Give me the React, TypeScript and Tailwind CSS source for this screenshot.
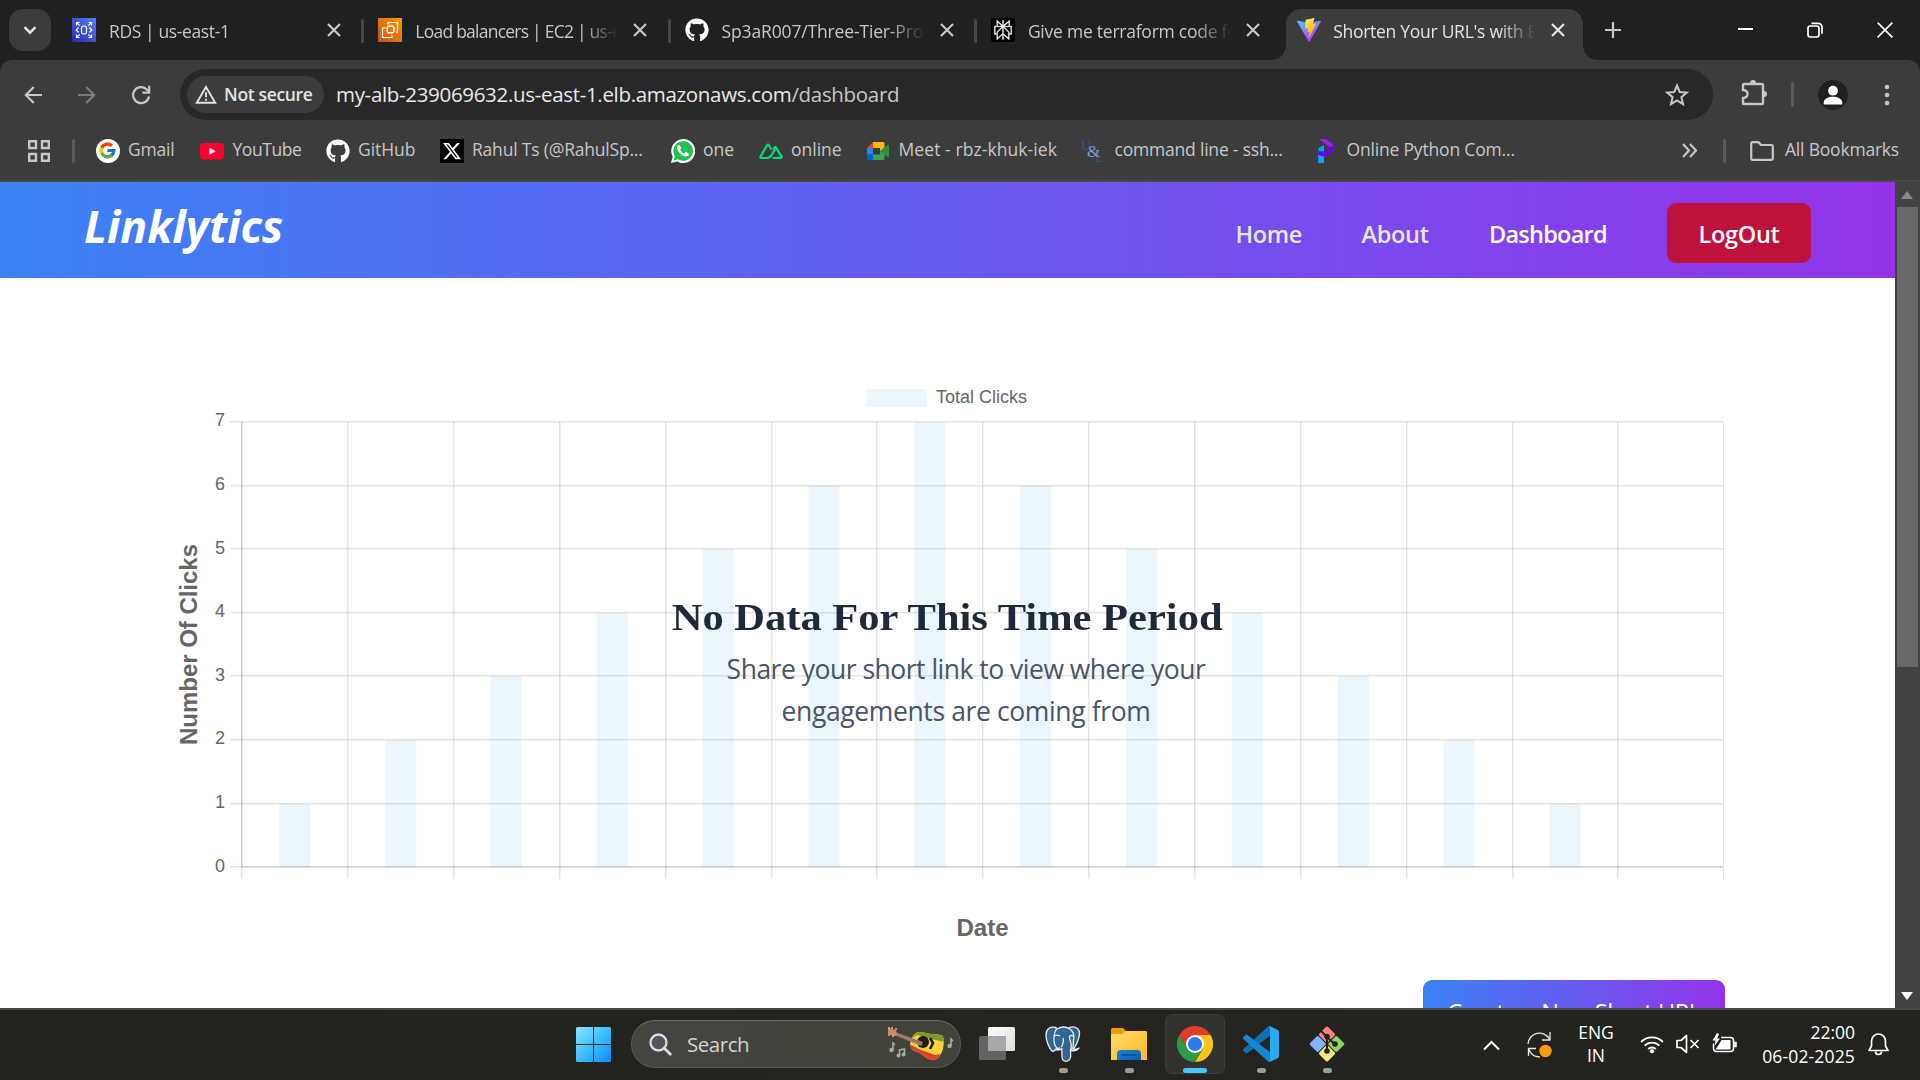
import type { ReactNode } from "react";
import { FaGithub, FaXTwitter } from "react-icons/fa6";
import { FcGoogle } from "react-icons/fc";
import { SiPerplexity } from "react-icons/si";

/* ---------- favicons ---------- */

function RdsIcon() {
  return (
    <svg width="24" height="24" viewBox="0 0 24 24" className="shrink-0" fill="none" stroke="#fff" strokeWidth="1.2">
      <defs>
        <linearGradient id="rds" x1="0" y1="1" x2="1" y2="0">
          <stop offset="0" stopColor="#2e27ad" />
          <stop offset="1" stopColor="#527fff" />
        </linearGradient>
      </defs>
      <rect width="24" height="24" fill="url(#rds)" stroke="none" />
      <path d="M4.500 7.500v-3h3M4.500 4.500l3.200 3.200M19.500 7.500v-3h-3M19.500 4.500l-3.200 3.200M4.500 16.500v3h3M4.500 19.500l3.200-3.200M19.500 16.500v3h-3M19.500 19.500l-3.200-3.200" />
      <path d="M6.500 9.500L4.200 12l2.300 2.500M17.500 9.500l2.300 2.500-2.300 2.500" />
      <rect x="9.500" y="8.200" width="5" height="7.600" rx="1.800" />
    </svg>
  );
}

function Ec2Icon() {
  return (
    <svg width="24" height="24" viewBox="0 0 24 24" className="shrink-0" fill="none" stroke="#fff" strokeWidth="1.2">
      <defs>
        <linearGradient id="ec2" x1="0" y1="1" x2="1" y2="0">
          <stop offset="0" stopColor="#c8511b" />
          <stop offset="1" stopColor="#f90" />
        </linearGradient>
      </defs>
      <rect width="24" height="24" fill="url(#ec2)" stroke="none" />
      <path d="M10 6.500V4.500h9.500V14H17.800M7.800 10H4.500v9.500H14V17.500" />
      <rect x="9.300" y="8.300" width="6.400" height="6.400" rx="1.200" />
      <path d="M11.200 6.800v1.500M13.800 6.800v1.500M11.200 14.700v1.500M13.800 14.700v1.500M7.800 10.200h1.500M7.800 12.800h1.500M15.700 10.200h1.500M15.700 12.800h1.500" strokeWidth="1" />
    </svg>
  );
}

function GithubIcon() {
  return <FaGithub size={24} color="#fff" className="shrink-0" />;
}

function PerplexityIcon() {
  return (
    <span className="flex size-6 shrink-0 items-center justify-center rounded-[2px] bg-black">
      <SiPerplexity size={20} color="#fff" stroke="#fff" strokeWidth={0.4} />
    </span>
  );
}

function ViteIcon() {
  return (
    <svg width="24" height="24" viewBox="0 0 24 24" className="shrink-0">
      <defs>
        <linearGradient id="viteA" x1="0" y1="0" x2="0.6" y2="1">
          <stop offset="0" stopColor="#41d1ff" />
          <stop offset="1" stopColor="#bd34fe" />
        </linearGradient>
        <linearGradient id="viteB" x1="0.4" y1="0" x2="0.6" y2="1">
          <stop offset="0" stopColor="#ffea83" />
          <stop offset="0.2" stopColor="#ffdd35" />
          <stop offset="1" stopColor="#ffa800" />
        </linearGradient>
      </defs>
      <path d="M23.800 3.700L12.700 23.500a.6.6 0 0 1-1.060 0L.2 3.700a.6.6 0 0 1 .64-.9l11.200 2 11.120-2a.6.6 0 0 1 .64.9z" fill="url(#viteA)" />
      <path d="M17 .1L8.800 1.700a.3.3 0 0 0-.24.28l-.5 8.500c0 .2.18.35.37.3l2.300-.53c.2-.05.4.14.35.35l-.68 3.340c-.05.22.16.42.38.35l1.400-.43c.23-.07.43.13.38.35l-1.080 5.250c-.07.33.37.5.55.23l.12-.18 6.730-13.430c.11-.23-.08-.48-.33-.43l-2.370.45c-.22.05-.41-.16-.35-.38L17.400.45A.3.3 0 0 0 17 .1z" fill="url(#viteB)" />
    </svg>
  );
}

function CloseGlyph({ className }: { className: string }) {
  return (
    <svg width="14" height="14" viewBox="0 0 14 14" className={className} fill="none" stroke="currentColor" strokeWidth="2.2">
      <path d="M1 1l12 12M13 1L1 13" />
    </svg>
  );
}

/* ---------- tab strip ---------- */

const tabs: { icon: ReactNode; title: string; track: string }[] = [
  { icon: <RdsIcon />, title: "RDS | us-east-1", track: "tracking-[-0.38px]" },
  { icon: <Ec2Icon />, title: "Load balancers | EC2 | us-east-1", track: "tracking-[-0.76px]" },
  { icon: <GithubIcon />, title: "Sp3aR007/Three-Tier-Project", track: "tracking-[-0.15px]" },
  { icon: <PerplexityIcon />, title: "Give me terraform code for", track: "tracking-[-0.24px]" },
];

const fade = "[mask-image:linear-gradient(to_right,#000_166px,transparent_203px)]";

function TabStrip() {
  return (
    <div className="flex h-[60px] shrink-0 bg-[#1f2120]">
      <button className="mt-[9px] ml-[9px] flex h-[42px] w-[42px] items-center justify-center rounded-[14px] bg-[#3c3c3c]">
        <svg width="14" height="9" viewBox="0 0 14 9" fill="none" stroke="#e3e3e3" strokeWidth="2.6">
          <path d="M1.500 1.200L7 6.700l5.500-5.500" />
        </svg>
      </button>
      <div className="ml-[6px] flex">
        {tabs.map((t, i) => (
          <div key={t.title} className="relative flex h-[60px] w-[306.3px] items-center pl-[15px]">
            {i > 0 && <span className="absolute top-[19px] left-[-2px] h-6 w-[3px] rounded-full bg-[#454545]" />}
            {t.icon}
            <span className={`ml-[13px] w-[205px] overflow-hidden pt-0.5 text-[17.5px] whitespace-nowrap text-[#c7c7c7] ${t.track} ${fade}`}>{t.title}</span>
            <CloseGlyph className="ml-[13px] text-[#c7c7c7]" />
          </div>
        ))}
      </div>
      <div className="relative ml-[4px] flex h-[60px] w-[297px] pt-[9px]">
        <span className="absolute bottom-0 left-[-14px] size-[14px] bg-[radial-gradient(circle_at_0_0,transparent_13.5px,#3c3c3c_14px)]" />
        <span className="absolute right-[-14px] bottom-0 size-[14px] bg-[radial-gradient(circle_at_100%_0,transparent_13.5px,#3c3c3c_14px)]" />
        <div className="flex h-full w-full items-center rounded-t-[15px] bg-[#3c3c3c] pb-[9px] pl-[11px]">
          <ViteIcon />
          <span className={`ml-[12px] w-[205px] overflow-hidden pt-0.5 text-[17.5px] tracking-[-0.28px] whitespace-nowrap text-[#e3e3e3] ${fade}`}>Shorten Your URL's with Ease</span>
          <CloseGlyph className="ml-[13px] text-[#e3e3e3]" />
        </div>
      </div>
      <svg width="16" height="16" viewBox="0 0 16 16" className="mt-[22px] ml-[22px]" stroke="#c7c7c7" strokeWidth="2.2">
        <path d="M8 0v16M0 8h16" />
      </svg>
      <div className="mr-[27px] ml-auto flex items-center gap-[54px] text-white">
        <span className="mt-[-2px] h-0.5 w-[15px] bg-white" />
        <svg width="16" height="16" viewBox="0 0 16 16" fill="none" stroke="currentColor" strokeWidth="1.7" className="mt-[-1px]">
          <rect x="1" y="4" width="11" height="11" rx="2.2" />
          <path d="M4.500 1.300h6.500a4 4 0 0 1 4 4v6.500" />
        </svg>
        <svg width="16" height="16" viewBox="0 0 16 16" stroke="currentColor" strokeWidth="1.7" className="mt-[-1px]">
          <path d="M.6.6l14.800 14.800M15.400.6L.6 15.400" />
        </svg>
      </div>
    </div>
  );
}

/* ---------- toolbar ---------- */

function Toolbar() {
  return (
    <div className="flex h-[69px] shrink-0 items-center text-[#c7c7c7]">
      <svg width="18" height="18" viewBox="0 0 18 18" className="ml-6 shrink-0" fill="none" stroke="currentColor" strokeWidth="2.2">
        <path d="M18 9H2M9.800 1L1.800 9l8 8" />
      </svg>
      <svg width="18" height="18" viewBox="0 0 18 18" className="ml-9 shrink-0 text-[#7d7d7d]" fill="none" stroke="currentColor" strokeWidth="2.2">
        <path d="M0 9h16M8.200 1l8 8-8 8" />
      </svg>
      <svg width="20" height="20" viewBox="0 0 20 20" className="ml-[35px] shrink-0" fill="none" stroke="currentColor" strokeWidth="2.2">
        <path d="M18 11.500A8 8 0 1 1 15.500 4.200L18 6.700" />
        <path d="M18.200.8v6.900h-6.900" />
      </svg>
      <div className="ml-[29px] flex h-[51px] w-[1533px] items-center rounded-full bg-[#282828] pl-[7px]">
        <div className="flex h-[37px] w-[137px] items-center rounded-full bg-[#3c3c3c] pl-2 text-[#e3e3e3]">
          <svg width="22" height="19" viewBox="0 0 22 19" className="shrink-0" fill="none" stroke="currentColor" strokeWidth="1.9">
            <path d="M11 2L20.200 17.800H1.800z" />
            <path d="M11 7.300v5M11 13.700v2" />
          </svg>
          <span className="ml-[7px] text-[17.5px] font-semibold tracking-[-0.33px] whitespace-nowrap">Not secure</span>
        </div>
        <span className="ml-[12px] text-[20.5px] tracking-[-0.32px] whitespace-nowrap text-[#e8e8e8]">
          my-alb-239069632.us-east-1.elb.amazonaws.com<span className="text-[#c7c7c7]">/dashboard</span>
        </span>
        <svg width="24" height="24" viewBox="0 0 24 24" className="mr-[24px] ml-auto" fill="none" stroke="currentColor" strokeWidth="2">
          <path d="M12 2.500l2.700 6.500 7 .6-5.300 4.600 1.600 6.900-6-3.700-6 3.700 1.600-6.900L2.300 9.600l7-.6z" />
        </svg>
      </div>
      <svg width="26" height="28" viewBox="0 0 26 28" className="mb-[3px] ml-[28px] shrink-0" fill="none" stroke="currentColor" strokeWidth="2.4">
        <path d="M3 5h18a1 1 0 0 1 1 1v18a1 1 0 0 1-1 1H3a1 1 0 0 1-1-1v-5c3.500 0 4.500-2 4.500-4s-1-4-4.500-4V6a1 1 0 0 1 1-1z" />
        <path d="M9 4a3 3 0 0 1 6 0zM23 12a3 3 0 0 1 0 6z" fill="currentColor" stroke="none" />
      </svg>
      <span className="ml-[24px] h-[25px] w-[3px] rounded-full bg-[#5a5a5a]" />
      <svg width="30" height="30" viewBox="0 0 30 30" className="ml-[24px] shrink-0">
        <circle cx="15" cy="15" r="15" fill="#1f2120" />
        <circle cx="15" cy="10.7" r="4.9" fill="#fff" />
        <path d="M5.700 24.500v-2c0-4 5-5.800 9.300-5.800s9.300 1.800 9.300 5.800v2z" fill="#fff" />
      </svg>
      <svg width="6" height="24" viewBox="0 0 6 24" className="ml-[36px] shrink-0" fill="currentColor">
        <circle cx="3" cy="4" r="2.3" />
        <circle cx="3" cy="12" r="2.3" />
        <circle cx="3" cy="20" r="2.3" />
      </svg>
    </div>
  );
}

/* ---------- bookmarks bar ---------- */

function WhatsappIcon() {
  return (
    <svg width="24" height="24" viewBox="0 0 24 24">
      <path d="M0 24l1.700-6.200A12 12 0 1 1 6.200 22.400z" fill="#fff" />
      <path d="M2.600 21.400l1.200-4.300A9.800 9.800 0 1 1 7 20.300z" fill="#1fc253" />
      <path d="M8.400 6.300c-.5-.5-1-.4-1.500.1-1.700 1.800-1 4.300 1.300 7 2.700 3.100 6 5 8.400 3.600 1-.6 1.500-1.700 1.200-2.300-.2-.4-2.300-1.500-2.800-1.600-.6 0-1.100 1.400-1.600 1.400-1 0-4.100-2.700-4.200-3.700 0-.5 1-1 1-1.600 0-.5-1.200-2.400-1.800-2.900z" fill="#fff" />
    </svg>
  );
}

function MeetIcon() {
  return (
    <svg width="24" height="24" viewBox="0 0 24 24">
      <path d="M1 9l6-6v6z" fill="#ea4335" />
      <path d="M1 9h6v6.500H1z" fill="#2684fc" />
      <path d="M1 15.500h6V21H2.500A1.500 1.500 0 0 1 1 19.500z" fill="#0066da" />
      <path d="M7 3h10a1.500 1.500 0 0 1 1.500 1.500v5L14 12V9H7z" fill="#ffba00" />
      <path d="M7 21v-5.500h7V12l4.500 2v5.500A1.500 1.500 0 0 1 17 21z" fill="#35a853" />
      <path d="M14 12l7.500-6c.6-.5 1.500 0 1.500.7v10.600c0 .7-.9 1.200-1.500.7z" fill="#2a8f47" />
    </svg>
  );
}

const bookmarks: { icon: ReactNode; label: string; cls: string; track: string }[] = [
  {
    icon: (
      <span className="flex size-6 items-center justify-center rounded-full bg-white">
        <FcGoogle size={19} />
      </span>
    ),
    label: "Gmail",
    cls: "w-[104.5px]",
    track: "tracking-[-0.2px]",
  },
  {
    icon: (
      <svg width="24" height="24" viewBox="0 0 24 24">
        <rect y="4" width="24" height="16.5" rx="4" fill="#ff0033" />
        <path d="M9.500 8.700v7l6-3.500z" fill="#fff" />
      </svg>
    ),
    label: "YouTube",
    cls: "w-[125.5px]",
    track: "tracking-[-0.45px]",
  },
  { icon: <GithubIcon />, label: "GitHub", cls: "w-[114px]", track: "tracking-[-0.05px]" },
  {
    icon: (
      <span className="flex size-6 items-center justify-center bg-black">
        <FaXTwitter size={20} color="#fff" />
      </span>
    ),
    label: "Rahul Ts (@RahulSp...",
    cls: "w-[231px]",
    track: "tracking-[-0.2px]",
  },
  { icon: <WhatsappIcon />, label: "one", cls: "w-[88px]", track: "tracking-[0px]" },
  {
    icon: (
      <svg width="24" height="24" viewBox="0 0 24 24" fill="none" stroke="#00dc82" strokeWidth="2.2" strokeLinejoin="round">
        <path d="M8 19H2.300a.9.9 0 0 1-.8-1.400L8.200 6a.9.9 0 0 1 1.600 0l2.600 4.500" />
        <path d="M8 19c2.500 0 3.500-1 4.500-2.700L16 10.200" />
        <path d="M13.500 19h8.200c.9 0 1.400-.8.900-1.500L17 8.600a.9.9 0 0 0-1.600 0l-1.200 2.200" />
      </svg>
    ),
    label: "online",
    cls: "w-[107.5px]",
    track: "tracking-[0px]",
  },
  { icon: <MeetIcon />, label: "Meet - rbz-khuk-iek", cls: "w-[216px]", track: "tracking-[0.08px]" },
  {
    icon: (
      <svg width="24" height="24" viewBox="0 0 24 24" className="font-['Liberation_Serif']">
        <text x="-1" y="11" fontSize="14" fill="#34508c">U</text>
        <text x="13" y="23" fontSize="14" fill="#34508c">L</text>
        <text x="5" y="18" fontSize="17" fill="#7f9bd8">&amp;</text>
      </svg>
    ),
    label: "command line - ssh...",
    cls: "w-[232px]",
    track: "tracking-[-0.2px]",
  },
  {
    icon: (
      <svg width="24" height="24" viewBox="0 0 24 24">
        <path d="M4.500 0H12l7.500 6v6L13 6z" fill="#9b1fff" />
        <path d="M4.500 9L10 6v18H4.500z" fill="#0a9bff" />
        <path d="M19.500 6v5.500l-9 6.500-6-2v-4l6 .5z" fill="#6a00e8" />
        <path d="M4.500 16l5.500 2v6H4.500z" fill="#0aa5ff" />
      </svg>
    ),
    label: "Online Python Com...",
    cls: "w-[230px]",
    track: "tracking-[-0.18px]",
  },
];

function BookmarksBar() {
  return (
    <div className="flex h-[53px] shrink-0 items-center border-b-2 border-[#474747] pb-3 text-[17.5px] whitespace-nowrap text-[#c7c7c7]">
      <svg width="22" height="22" viewBox="0 0 22 22" className="mt-1 ml-[28px] shrink-0" fill="none" stroke="currentColor" strokeWidth="2.4">
        <path d="M1.200 1.200h6.800v6.800H1.200zM14 1.200h6.800v6.800H14zM1.200 14h6.800v6.800H1.200zM14 14h6.800v6.800H14z" />
      </svg>
      <span className="mt-1 ml-[22px] h-6 w-[3px] shrink-0 rounded-full bg-[#5a5a5a]" />
      <div className="mt-1 ml-[20.5px] flex">
        {bookmarks.map((b) => (
          <div key={b.label} className={`flex shrink-0 items-center ${b.cls}`}>
            <span className="size-6 shrink-0">{b.icon}</span>
            <span className={`ml-[8.5px] pb-0.5 ${b.track}`}>{b.label}</span>
          </div>
        ))}
      </div>
      <svg width="15" height="15" viewBox="0 0 15 15" className="mt-1 mr-[26px] ml-auto shrink-0" fill="none" stroke="currentColor" strokeWidth="2.2">
        <path d="M1 1l6 6.500L1 14M8 1l6 6.500L8 14" />
      </svg>
      <span className="mt-1 h-6 w-[3px] shrink-0 rounded-full bg-[#5a5a5a]" />
      <svg width="24" height="20" viewBox="0 0 24 20" className="mt-1 ml-[24px] shrink-0" fill="none" stroke="currentColor" strokeWidth="2.2">
        <path d="M1.200 17.500V2.500A1.300 1.300 0 0 1 2.500 1.200h6L11 4h10.500A1.300 1.300 0 0 1 22.800 5.300v12.200a1.300 1.300 0 0 1-1.300 1.300h-19a1.300 1.300 0 0 1-1.300-1.300z" />
      </svg>
      <span className="mt-1 mr-[21px] ml-[11px] pb-0.5 tracking-[-0.2px]">All Bookmarks</span>
    </div>
  );
}

/* ---------- page ---------- */

function NavBar() {
  return (
    <header className="flex h-24 shrink-0 items-center bg-linear-to-r/srgb from-[#3b82f6] to-[#9333ea] pr-[84px] pl-[84px] text-[23.5px] font-semibold text-[#e5e7eb]">
      <h1 className="mt-[-7px] font-['Noto_Sans'] text-[44.5px] font-bold text-white italic">Linklytics</h1>
      <nav className="ml-auto flex items-center pt-[9px]">
        <span className="w-[126px] tracking-[-0.4px]">Home</span>
        <span className="w-[127.5px] tracking-[-0.3px]">About</span>
        <span className="w-[178px] tracking-[-0.75px] text-white">Dashboard</span>
      </nav>
      <button className="mt-[5px] flex h-[60px] w-[144px] items-center justify-center rounded-[9px] bg-[#be123c] pt-[4px] tracking-[-0.3px] text-white">LogOut</button>
    </header>
  );
}

const clicks = [1, 2, 3, 4, 5, 6, 7, 6, 5, 4, 3, 2, 1, 0];
const X0 = 241.75;
const STEP_X = 105.86;
const STEP_Y = 63.6;
const BASE = 589;
const TOP = BASE - 7 * STEP_Y;

function ClicksChart() {
  return (
    <svg width="1895" height="730" viewBox="0 0 1895 730" className="block font-['Liberation_Sans']">
      <rect x="867" y="111" width="60" height="18" fill="rgb(235,246,253)" />
      <text x="936" y="125" fontSize="18" fill="#666" textLength="91">Total Clicks</text>
      {clicks.map((v, i) => (
        <g key={i}>
          {i > 0 && <rect x={Math.round(X0 + i * STEP_X - 0.5)} y={TOP} width="1.5" height={BASE - TOP + 12} fill="rgba(0,0,0,0.1)" />}
          {v > 0 && <rect x={X0 + (i + 0.5) * STEP_X - 15.5} y={BASE - v * STEP_Y} width="31" height={v * STEP_Y} fill="rgba(54,162,235,0.1)" />}
        </g>
      ))}
      <rect x="1723" y={TOP} width="1" height={BASE - TOP + 12} fill="rgba(0,0,0,0.1)" />
      {[0, 1, 2, 3, 4, 5, 6, 7].map((n) => (
        <g key={n}>
          <rect x="230" y={Math.round(BASE - n * STEP_Y - 0.75)} width="1493" height="1.5" fill="rgba(0,0,0,0.1)" />
          <text x="225" y={BASE - n * STEP_Y + 4.5} fontSize="18" fill="#666" textAnchor="end">{n}</text>
        </g>
      ))}
      <rect x="241" y={TOP} width="1.5" height={BASE - TOP} fill="rgba(0,0,0,0.2)" />
      <rect x="241" y={BASE} width="1.5" height="12" fill="rgba(0,0,0,0.1)" />
      <rect x="242" y={BASE - 1} width="1481" height="1.5" fill="rgba(0,0,0,0.1)" />
      <text transform="translate(197 366.5) rotate(-90)" fontSize="24" fontWeight="700" fill="#666" textAnchor="middle" textLength="201">Number Of Clicks</text>
      <text x="982.5" y="658" fontSize="24" fontWeight="700" fill="#666" textAnchor="middle">Date</text>
    </svg>
  );
}

function Dashboard() {
  return (
    <main className="relative flex min-h-0 flex-1 flex-col overflow-hidden bg-white">
      <NavBar />
      <div className="relative h-[702px] shrink-0">
        <ClicksChart />
        <div className="absolute inset-x-0 top-[317px] flex flex-col items-center text-center">
          <h2 className="scale-x-[1.119] font-['Liberation_Serif'] text-[38px] leading-[44px] font-bold text-[#1e293b]">No Data For This Time Period</h2>
          <p className="mt-[9px] ml-[37px] text-[26.5px] leading-[42px] text-[#475569]">
            <span className="block tracking-[-0.5px]">Share your short link to view where your</span>
            <span className="block tracking-[-0.38px]">engagements are coming from</span>
          </p>
        </div>
      </div>
      <button className="ml-[1423px] flex h-[66px] w-[302px] shrink-0 justify-center rounded-[9px] bg-linear-to-r/srgb from-[#3b82f6] to-[#9333ea] pt-[14px] text-[23.5px] leading-9 tracking-[-0.4px] whitespace-nowrap text-white">
        Create a New Short URL
      </button>
    </main>
  );
}

function Scrollbar() {
  return (
    <div className="flex w-[25px] shrink-0 flex-col items-center bg-[#424242]">
      <svg width="12" height="9" viewBox="0 0 12 9" className="mt-[9px] mr-px shrink-0">
        <path d="M0 8L6 0l6 8z" fill="#8a8a8a" />
      </svg>
      <div className="mt-[7px] h-[460px] w-[21px] bg-[#686868]" />
      <svg width="12" height="8" viewBox="0 0 12 8" className="mt-auto mr-px mb-[8px] shrink-0">
        <path d="M0 0h12L6 8z" fill="#fff" />
      </svg>
    </div>
  );
}

/* ---------- taskbar ---------- */

function WindowsLogo() {
  return (
    <svg width="35" height="35" viewBox="0 0 35 35" className="shrink-0">
      <defs>
        <linearGradient id="win" x1="0" y1="0" x2="1" y2="1">
          <stop offset="0" stopColor="#8be3ff" />
          <stop offset="0.5" stopColor="#3cc0fb" />
          <stop offset="1" stopColor="#0a8bf5" />
        </linearGradient>
      </defs>
      <path d="M1.500 0H17v17H0V1.500A1.500 1.500 0 0 1 1.500 0zM18 0h15.500A1.500 1.500 0 0 1 35 1.500V17H18zM0 18h17v17H1.500A1.500 1.500 0 0 1 0 33.500zM18 18h17v15.500a1.500 1.500 0 0 1-1.500 1.500H18z" fill="url(#win)" />
    </svg>
  );
}

function Guitar() {
  return (
    <svg width="68" height="40" viewBox="0 -3 68 40" className="ml-auto">
      <defs>
        <clipPath id="body">
          <path d="M28 6.500c4-3 9-1 13 0 5 1 10 0 15 2.500 2 8 0 17-5 22-5 4-10 1-14-2-4-4-10-4-13-8-2-5 0-11 4-14.500z" />
        </clipPath>
      </defs>
      <g clipPath="url(#body)">
        <rect x="20" width="45" height="38" fill="#fbd43c" />
        <path d="M20 0h45v17L40 11l-10-3-8 5z" fill="#7c9a2c" />
        <path d="M20 16l14 7 14 5 14-2v12H20z" fill="#e2402c" />
      </g>
      <circle cx="36" cy="15" r="6" fill="#241c14" />
      <path d="M43 11l3 5-3 6" stroke="#241c14" strokeWidth="2.6" fill="none" />
      <path d="M8 5l28 10-1.500 4L7 8z" fill="#a5776a" />
      <path d="M1 1l8 2 1 5-3 1-6-2z" fill="#d28a5c" />
      <path d="M2 0v2M5 0v2M9 1v2M2 7v2M6 8v2" stroke="#b9bcc2" strokeWidth="1.5" />
      <g fill="none" stroke="#a9aaa6" strokeWidth="1.6">
        <path d="M6 23v-7l2 2M12.500 28v-5l5-1v5M64 19v-7l2 2" />
      </g>
      <g fill="#a9aaa6">
        <circle cx="4.5" cy="23" r="2.2" />
        <circle cx="11.5" cy="28.500" r="2" />
        <circle cx="16.500" cy="27.500" r="2" />
        <circle cx="62.500" cy="19" r="2.2" />
      </g>
    </svg>
  );
}

function TaskView() {
  return (
    <svg width="36" height="36" viewBox="0 0 36 36">
      <defs>
        <linearGradient id="tv" x1="0" y1="0" x2="1" y2="1">
          <stop offset="0" stopColor="#fff" />
          <stop offset="1" stopColor="#dcdcdc" />
        </linearGradient>
      </defs>
      <rect x="9" y="1" width="27" height="24" rx="1.5" fill="url(#tv)" />
      <rect x="0" y="10" width="27" height="24" rx="1.5" fill="#636363" />
      <rect x="9" y="10" width="18" height="15" fill="#a8a8a8" />
    </svg>
  );
}

function Postgres() {
  return (
    <svg width="36" height="36" viewBox="0 0 36 36" fill="#336791" stroke="#e6edf3" strokeWidth="1.3" strokeLinejoin="round">
      <path d="M11 1.500C5 .2 1 3 1 9c0 5 2.500 12 5.500 15.500 1.500 1.500 3 .5 4.500-1.500l2-3z" />
      <path d="M24 1.500c6-1.800 11 1 10.500 6.500-.4 5-3 10.500-5.500 14.500l-3-1z" />
      <path d="M12 3c4-2.500 9-2.500 13 0 3 2.500 4.500 7 3.500 11-.5 3 .2 5-.7 8-.3 1-1.300 1.500-2.300 1.300l.2 7c-.2 3-2 4.700-4.700 5-2.200 0-3.700-1.300-4-4l-.3-9c-1 .8-3 .9-4.200 0-2-1.300-3.500-5-3.500-9C9 9 9 5 12 3z" />
      <path d="M26 22c2 1.500 5.500 1.400 8 0-1 2-4.500 3.300-8 2.500zM16.700 22.300c-1 1.700-4 2.300-6 1.200 1.200-.6 2.500-.2 4-2" />
      <path d="M15 10c-2.500-1.200-5-1-6 1M18 12c1 3 .5 5-1.500 9M24.500 10c2-.8 3.500-.6 4.300.5M24.500 10c-.6 4 3 7 1.500 12" fill="none" />
    </svg>
  );
}

function Explorer() {
  return (
    <svg width="36" height="36" viewBox="0 0 36 36">
      <defs>
        <linearGradient id="fold" x1="0" y1="0" x2="1" y2="1">
          <stop offset="0" stopColor="#ffdc6b" />
          <stop offset="1" stopColor="#fdb924" />
        </linearGradient>
        <linearGradient id="tray" x1="0" y1="0" x2="1" y2="1">
          <stop offset="0" stopColor="#1687dc" />
          <stop offset="1" stopColor="#0a5cae" />
        </linearGradient>
      </defs>
      <path d="M0 3.500A1.500 1.500 0 0 1 1.500 2H12l3.500 3.500V12H0z" fill="#e3a008" />
      <path d="M0 8h11l4-3h19.500A1.500 1.500 0 0 1 36 6.500V34H0z" fill="url(#fold)" />
      <path d="M6 34v-6.500A3.500 3.500 0 0 1 9.500 24h17a3.500 3.500 0 0 1 3.500 3.500V34z" fill="url(#tray)" />
      <path d="M11 29h14" stroke="#0a4a8c" strokeWidth="1.5" strokeLinecap="round" />
    </svg>
  );
}

function Chrome() {
  return (
    <svg width="36" height="36" viewBox="0 0 36 36">
      <path d="M33.600 9A18 18 0 0 1 18 36l7.800-13.500L18 9z" fill="#fcc31e" />
      <path d="M18 36A18 18 0 0 1 2.400 9l7.800 13.500h15.600z" fill="#2e9a47" />
      <path d="M2.400 9A18 18 0 0 1 33.600 9H18l-7.800 13.500z" fill="#e33b2e" />
      <circle cx="18" cy="18" r="9" fill="#fff" />
      <circle cx="18" cy="18" r="7.1" fill="#2f7bed" />
    </svg>
  );
}

function VsCode() {
  return (
    <svg width="36" height="36" viewBox="0 0 24 24">
      <path d="M18 .1v6.450L3 18a1 1 0 0 1-1.350-.06L.33 16.740a1 1 0 0 1 0-1.480L16.500.5A1.500 1.500 0 0 1 18 .1z" fill="#0f6fb8" />
      <path d="M18 23.900v-6.450L3 6a1 1 0 0 0-1.350.06L.33 7.260a1 1 0 0 0 0 1.480L16.500 23.500a1.500 1.500 0 0 0 1.500.4z" fill="#1488d4" />
      <path d="M23.150 2.590L18.200.21A1.500 1.500 0 0 0 17.300.1L18 1v22l-.7.9c.3.07.6.03.9-.1l4.950-2.380A1.500 1.500 0 0 0 24 20.060V3.940a1.500 1.500 0 0 0-.85-1.350z" fill="#2aa9f3" />
    </svg>
  );
}

function GitBash() {
  return (
    <svg width="36" height="36" viewBox="0 0 36 36">
      <g transform="rotate(45 18 18)">
        <rect x="5.3" y="5.3" width="12.2" height="12.2" rx="1.5" fill="#ff8080" />
        <rect x="18.5" y="5.3" width="12.2" height="12.2" rx="1.5" fill="#8fd45f" />
        <rect x="5.3" y="18.5" width="12.2" height="12.2" rx="1.5" fill="#7fb2ff" />
        <rect x="18.5" y="18.5" width="12.2" height="12.2" rx="1.5" fill="#ffe680" />
      </g>
      <path d="M12 5l6 6v14M18 11l7.500 7" stroke="#22231f" strokeWidth="2" fill="none" />
      <circle cx="18" cy="10.5" r="2.8" fill="#22231f" />
      <circle cx="18" cy="25" r="2.8" fill="#22231f" />
      <circle cx="26" cy="18" r="2.8" fill="#22231f" />
    </svg>
  );
}

const apps: { name: string; icon: ReactNode; state: "idle" | "open" | "active" }[] = [
  { name: "Task View", icon: <TaskView />, state: "idle" },
  { name: "pgAdmin", icon: <Postgres />, state: "open" },
  { name: "Explorer", icon: <Explorer />, state: "open" },
  { name: "Chrome", icon: <Chrome />, state: "active" },
  { name: "VS Code", icon: <VsCode />, state: "open" },
  { name: "Git Bash", icon: <GitBash />, state: "open" },
];

function Tray() {
  return (
    <div className="mr-[31px] ml-auto flex items-center text-[17.5px] text-white">
      <svg width="17" height="11" viewBox="0 0 17 11" fill="none" stroke="currentColor" strokeWidth="2" className="mt-[2px]">
        <path d="M1 9.500l7.500-7.500L16 9.500" />
      </svg>
      <svg width="25" height="28" viewBox="0 0 25 28" className="ml-[27px]" fill="none" stroke="#e8e8e8" strokeWidth="1.3">
        <path d="M1 14A11.500 11.500 0 0 1 22.500 9M23 2v8h-8M9 26.500A11 11 0 0 1 2 19.500M1.500 26v-7.500h7.500M9 26.500l4 .3" />
        <circle cx="18.5" cy="21" r="6.2" fill="#ff9a0a" stroke="none" />
      </svg>
      <div className="ml-[26px] flex w-9 flex-col items-center gap-px leading-[21.5px]">
        <span>ENG</span>
        <span>IN</span>
      </div>
      <svg width="24" height="20" viewBox="0 0 24 20" className="ml-[26px]" fill="none" stroke="currentColor" strokeWidth="1.9">
        <path d="M1 8a15.500 15.500 0 0 1 22 0M4.700 11.700a10.300 10.300 0 0 1 14.600 0M8.200 15a5.400 5.400 0 0 1 7.600 0" />
        <circle cx="12" cy="17.2" r="2.1" fill="currentColor" stroke="none" />
      </svg>
      <svg width="24" height="20" viewBox="0 0 24 20" className="ml-[12px]" fill="none" stroke="currentColor" strokeWidth="1.7">
        <path d="M1 6.500h4l5.500-5v17L5 13.500H1z" strokeLinejoin="round" />
        <path d="M14.500 6l8 8M22.500 6l-8 8" />
      </svg>
      <svg width="25" height="22" viewBox="0 0 25 22" className="ml-[12px]" fill="none" stroke="currentColor" strokeWidth="1.5">
        <path d="M9 4.500h9.500a3 3 0 0 1 3 3v8a3 3 0 0 1-3 3H4.500a3 3 0 0 1-3-3v-5" />
        <path d="M9.500 7h9v9.500h-15l4-6z" fill="currentColor" stroke="none" />
        <path d="M22 9.500h2v4h-2z" fill="currentColor" />
        <path d="M5 0L.5 7.500h3L2.500 13 8 5.500H5.200L7 1z" fill="currentColor" stroke="none" />
      </svg>
      <div className="ml-[23px] flex w-[95px] flex-col items-end leading-6">
        <span>22:00</span>
        <span className="tracking-[0.15px]">06-02-2025</span>
      </div>
      <svg width="21" height="23" viewBox="0 0 21 23" className="ml-[13px]" fill="none" stroke="currentColor" strokeWidth="1.7" strokeLinejoin="round">
        <path d="M10.500 1A7 7 0 0 0 3.500 8v5L1 17.500h19L17.500 13V8a7 7 0 0 0-7-7z" />
        <path d="M7.500 18.500a3 3 0 0 0 6 0" />
      </svg>
    </div>
  );
}

function Taskbar() {
  return (
    <footer className="flex h-[72px] shrink-0 items-center border-t-2 border-[#464743] bg-[#22231f] bg-linear-to-r from-[#20221e] via-[#25241e] to-[#22231e] pb-[2px]">
      <div className="ml-[576px]">
        <WindowsLogo />
      </div>
      <div className="ml-5 flex h-12 w-[330px] items-center rounded-full border border-[#595955] border-t-[#6d6b66] bg-linear-to-r from-[#44453f] to-[#42423a] pr-[5px] pl-[17px]">
        <svg width="23" height="23" viewBox="0 0 23 23" fill="none" stroke="#dcdce4" strokeWidth="2.3">
          <circle cx="9.5" cy="9.5" r="8" fill="#55555a" />
          <path d="M15.300 15.300l6 6" strokeLinecap="round" strokeWidth="2.8" />
        </svg>
        <span className="ml-[15px] pt-px text-[20.5px] tracking-[-0.45px] text-[#d4d5cf]">Search</span>
        <Guitar />
      </div>
      <div className="ml-[6px] flex">
        {apps.map((a) => (
          <div
            key={a.name}
            className={`mr-[6px] flex h-[60px] w-[60px] flex-col items-center rounded-[7px] border pt-[11px] ${a.state === "active" ? "border-[#3c3c38] bg-[#32322e]" : "border-transparent"}`}
          >
            {a.icon}
            {a.state === "open" && <span className="mt-[6px] h-[5px] w-[9px] rounded-full bg-[#9c9c9a]" />}
            {a.state === "active" && <span className="mt-[6px] h-[5px] w-6 rounded-full bg-[#4cc2ff]" />}
          </div>
        ))}
      </div>
      <Tray />
    </footer>
  );
}

export default function App() {
  return (
    <div className="flex h-[1080px] w-[1920px] flex-col overflow-hidden bg-[#1f2120] font-['Open_Sans',sans-serif]">
      <TabStrip />
      <div className="flex shrink-0 flex-col rounded-t-[12px] bg-[#3c3c3c]">
        <Toolbar />
        <BookmarksBar />
      </div>
      <div className="flex h-[826px] shrink-0">
        <Dashboard />
        <Scrollbar />
      </div>
      <Taskbar />
    </div>
  );
}
